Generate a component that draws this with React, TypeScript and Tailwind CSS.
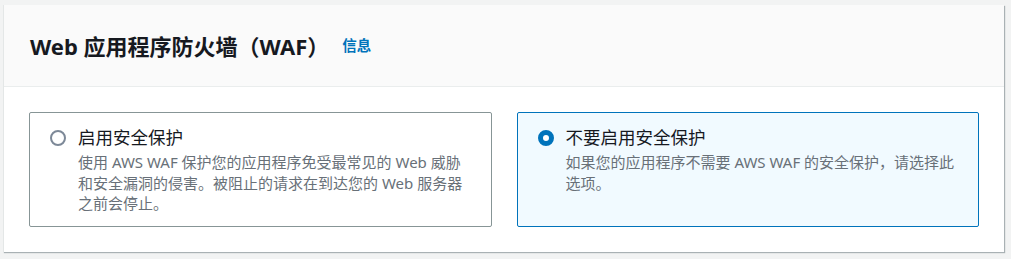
const FONT = '"Noto Sans", "Noto Sans CJK SC", sans-serif';

function Radio({ checked }: { checked: boolean }) {
  if (checked) {
    return <span className="mt-[6px] h-4 w-4 shrink-0 rounded-full border-[5px] border-[#0073bb] bg-white" />;
  }
  return <span className="mt-[6px] h-4 w-4 shrink-0 rounded-full border-2 border-[#7d8998] bg-white" />;
}

function Tile({ checked, label, lines }: { checked: boolean; label: string; lines: string[] }) {
  return (
    <div
      className={`flex flex-1 gap-3 rounded-[2px] border pl-5 pr-5 pt-[11px] pb-3 ${
        checked ? 'border-[#0073bb] bg-[#f1faff]' : 'border-[#879596] bg-white'
      }`}
    >
      <Radio checked={checked} />
      <div>
        <div className="text-[17.5px] leading-[26px] text-[#16191f]">{label}</div>
        <div className="mt-[2px] text-[15px] leading-[20.7px] text-[#687078]">
          {lines.map((l, i) => (
            <div key={i}>{l}</div>
          ))}
        </div>
      </div>
    </div>
  );
}

export default function App() {
  return (
    <div className="h-[259px] w-[1011px] bg-[#f2f3f3] pt-[5px] pl-[3px]" style={{ fontFamily: FONT }}>
      <div className="w-[1001px] border-l border-[#e4e7e7] bg-white shadow-[1px_1px_1px_0_rgba(0,28,36,0.3)]">
        <div className="flex h-[82px] items-center border-b border-[#eaeded] bg-[#fafafa] pl-[26px]">
          <h2 className="text-[22px] font-bold leading-[30px] text-[#16191f]">Web 应用程序防火墙（WAF）</h2>
          <a className="ml-[13px] mt-[1px] text-[14.5px] font-bold text-[#0073bb]">信息</a>
        </div>
        <div className="flex gap-[25px] p-[25px]">
          <Tile
            checked={false}
            label="启用安全保护"
            lines={[
              '使用 AWS WAF 保护您的应用程序免受最常见的 Web 威胁',
              '和安全漏洞的侵害。被阻止的请求在到达您的 Web 服务器',
              '之前会停止。',
            ]}
          />
          <Tile
            checked={true}
            label="不要启用安全保护"
            lines={['如果您的应用程序不需要 AWS WAF 的安全保护，请选择此', '选项。']}
          />
        </div>
      </div>
    </div>
  );
}
